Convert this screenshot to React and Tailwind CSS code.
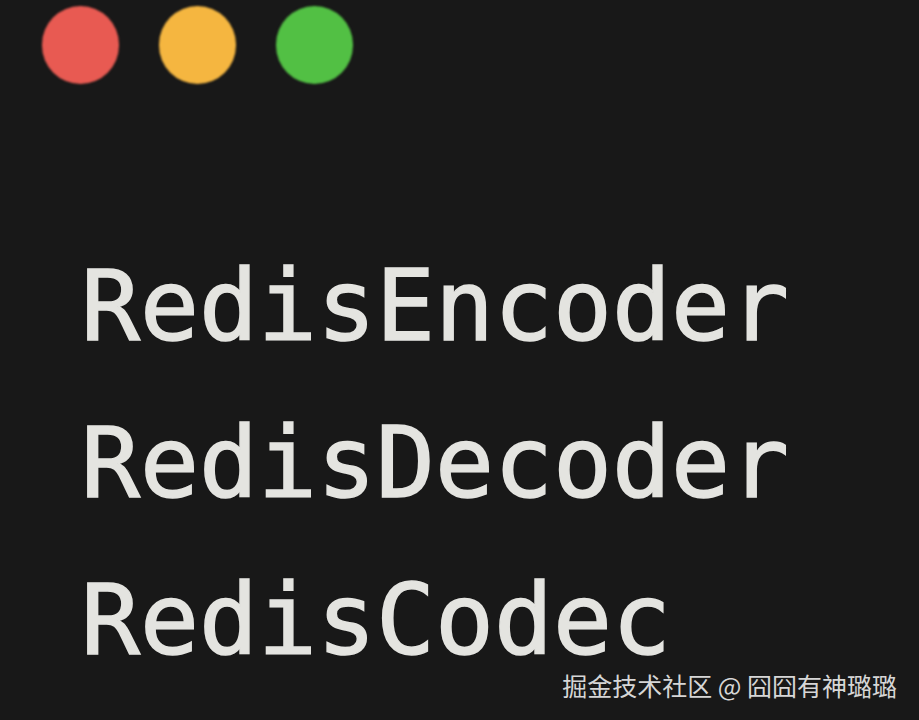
export default function App() {
  return (
    <div className="relative w-[919px] h-[720px] overflow-hidden bg-[#181818]">
      <div className="flex gap-[40px] pl-[42px] pt-[6px]">
        <div className="w-[77px] h-[78px] rounded-full bg-[#e85a52] blur-[1px]" />
        <div className="w-[77px] h-[78px] rounded-full bg-[#f5b640] blur-[1px]" />
        <div className="w-[77px] h-[78px] rounded-full bg-[#52c044] blur-[1px]" />
      </div>
      <div
        className="pl-[81px] pt-[144px] text-[98px] leading-[157px] text-[#e4e4e0] blur-[0.6px] [-webkit-text-stroke:1.5px_#e4e4e0]"
        style={{ fontFamily: '"DejaVu Sans Mono", monospace' }}
      >
        <div>RedisEncoder</div>
        <div>RedisDecoder</div>
        <div>RedisCodec</div>
      </div>
      <div
        className="absolute right-[22px] bottom-[20px] text-[25px] leading-[30px] text-[#d6d6d6]"
        style={{ fontFamily: '"Noto Sans CJK SC", "Noto Sans", sans-serif' }}
      >
        掘金技术社区 @ 囧囧有神璐璐
      </div>
    </div>
  );
}
